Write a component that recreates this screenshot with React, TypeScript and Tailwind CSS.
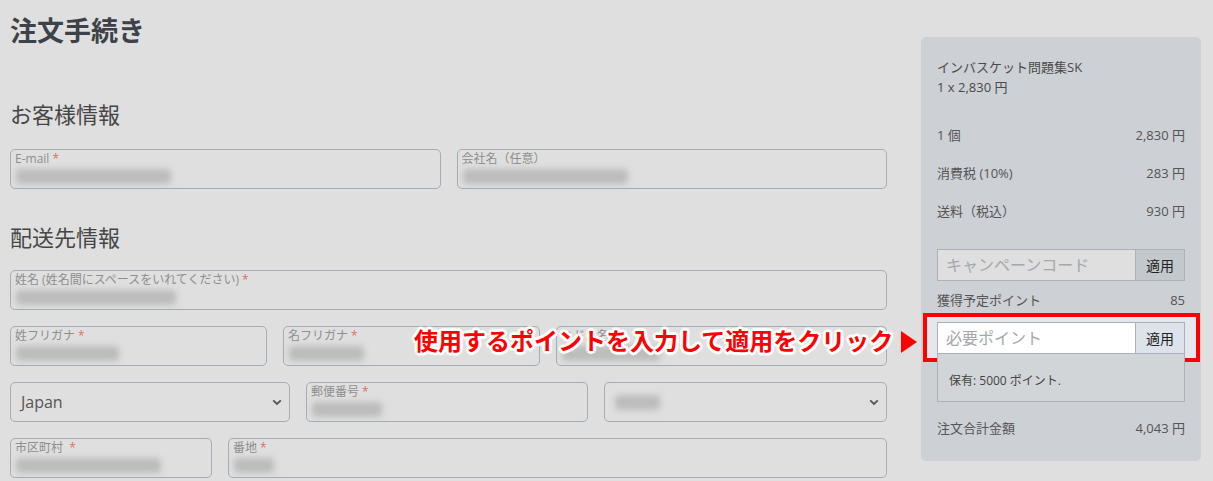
import React from "react";

const FONT = "font-['Open_Sans','Noto_Sans_CJK_JP',sans-serif]";

function Blur({ w, className = "" }: { w: number; className?: string }) {
  return (
    <div
      className={`h-[15px] bg-[#bcbcbc] blur-[3px] rounded-sm ${className}`}
      style={{ width: w }}
    />
  );
}

function Field({
  label,
  req = true,
  blurW,
  className = "",
}: {
  label: string;
  req?: boolean;
  blurW: number;
  className?: string;
}) {
  return (
    <div
      className={`h-[40px] border border-[#a3adb8] rounded-[5px] px-[4px] flex flex-col ${className}`}
    >
      <div className="text-[12px] leading-[14px] pt-[2px] text-[#8e8e8e] whitespace-nowrap">
        {label}
        {req && <span className="text-[#e0705e] ml-[3px]">*</span>}
      </div>
      <div className="mt-[3px] ml-[1px]">
        <Blur w={blurW} />
      </div>
    </div>
  );
}

function Chevron() {
  return (
    <svg width="10" height="7" viewBox="0 0 10 7" className="shrink-0">
      <path d="M1.2 1.3 L5 5 L8.8 1.3" fill="none" stroke="#555" strokeWidth="1.8" />
    </svg>
  );
}

function SelectBox({
  children,
  className = "",
}: {
  children: React.ReactNode;
  className?: string;
}) {
  return (
    <div
      className={`h-[40px] border border-[#a3adb8] rounded-[5px] pl-[8px] pr-[7px] flex items-center justify-between ${className}`}
    >
      {children}
      <Chevron />
    </div>
  );
}

function Row({ l, r }: { l: string; r: string }) {
  return (
    <div className="flex justify-between text-[13px] leading-[20px] text-[#555]">
      <span>{l}</span>
      <span>{r}</span>
    </div>
  );
}

export default function App() {
  const outline =
    "[text-shadow:2px_0_0_#fff,-2px_0_0_#fff,0_2px_0_#fff,0_-2px_0_#fff,2px_2px_0_#fff,-2px_-2px_0_#fff,2px_-2px_0_#fff,-2px_2px_0_#fff,3px_0_1px_#fff,-3px_0_1px_#fff,0_3px_1px_#fff,0_-3px_1px_#fff]";
  return (
    <div className={`${FONT} relative w-[1213px] h-[481px] overflow-hidden bg-[#dfdfdf]`}>
      <div className="flex pl-[10px] pr-[12px]">
        {/* main column */}
        <div className="w-[877px] shrink-0">
          <h1 className="pt-[13px] text-[27px] leading-[36px] font-bold text-[#3c4248]">
            注文手続き
          </h1>
          <h2 className="mt-[50px] text-[22px] leading-[30px] text-[#464646]">お客様情報</h2>
          <div className="mt-[20px] flex gap-[16px]">
            <Field label="E-mail" blurW={155} className="flex-1" />
            <Field label="会社名（任意）" req={false} blurW={165} className="flex-1" />
          </div>
          <h2 className="mt-[33px] text-[22px] leading-[30px] text-[#464646]">配送先情報</h2>
          <div className="mt-[18px]">
            <Field
              label="姓名 (姓名間にスペースをいれてください)"
              blurW={160}
              className="w-full"
            />
          </div>
          <div className="mt-[16px] flex gap-[16px]">
            <Field label="姓フリガナ" blurW={103} className="w-[257px]" />
            <Field label="名フリガナ" blurW={75} className="w-[257px]" />
            <Field label="ミドル名" req={false} blurW={98} className="flex-1" />
          </div>
          <div className="mt-[16px] flex gap-[16px]">
            <SelectBox className="w-[280px]">
              <span className="text-[16px] text-[#555] pl-[2px]">Japan</span>
            </SelectBox>
            <Field label="郵便番号" blurW={70} className="w-[282px]" />
            <SelectBox className="flex-1">
              <Blur w={45} className="ml-[2px]" />
            </SelectBox>
          </div>
          <div className="mt-[16px] flex gap-[16px]">
            <Field label="市区町村 " blurW={145} className="w-[202px]" />
            <Field label="番地" blurW={40} className="flex-1" />
          </div>
        </div>

        {/* right panel */}
        <div className="ml-[34px] mt-[37px] w-[280px] h-[424px] shrink-0 bg-[#cdd0d4] rounded-[5px] px-[16px] pt-[20px]">
          <div className="text-[13px] leading-[20px] text-[#4a4a4a]">インバスケット問題集SK</div>
          <div className="text-[13px] leading-[20px] text-[#4a4a4a]">1 x 2,830 円</div>
          <div className="mt-[28px] flex flex-col gap-[18px]">
            <Row l="1 個" r="2,830 円" />
            <Row l="消費税 (10%)" r="283 円" />
            <Row l="送料（税込）" r="930 円" />
          </div>
          <div className="mt-[28px] flex h-[32px] border border-[#a9b1ba]">
            <div className="flex-1 bg-[#dfdfdf] px-[8px] flex items-center text-[16px] text-[#a3a8ad]">
              キャンペーンコード
            </div>
            <div className="w-[49px] bg-[#c3c8cc] border-l border-[#a9b1ba] flex items-center justify-center text-[14px] text-[#222]">
              適用
            </div>
          </div>
          <div className="mt-[9px]">
            <Row l="獲得予定ポイント" r="85" />
          </div>
          <div className="relative mt-[12px]">
            <div className="absolute -left-[14px] -right-[15px] -top-[9px] -bottom-[8px] border-[4px] border-[#ff0000] bg-[#e4e8ec]" />
            <div className="relative flex h-[32px] border border-[#a9b1ba]">
              <div className="flex-1 bg-white px-[8px] flex items-center text-[16px] text-[#a3a8ad]">
                必要ポイント
              </div>
              <div className="w-[49px] bg-[#dde3ea] border-l border-[#a9b1ba] flex items-center justify-center text-[14px] text-[#222]">
                適用
              </div>
            </div>
          </div>
          <div className="relative h-[48px] border border-t-0 border-[#a9b1ba] bg-[#d2d5d8] flex items-center px-[11px] text-[12px] text-[#444]">
            <span className="mt-[6px]">保有: 5000 ポイント.</span>
          </div>
          <div className="mt-[16px]">
            <Row l="注文合計金額" r="4,043 円" />
          </div>
        </div>
      </div>

      {/* annotation */}
      <div
        className={`absolute left-[414px] top-[326px] text-[24px] leading-[30px] font-bold text-[#ff0000] whitespace-nowrap ${outline}`}
      >
        使用するポイントを入力して適用をクリック
      </div>
      <svg className="absolute left-[900px] top-[330px]" width="18" height="24" viewBox="0 0 18 24">
        <path d="M1 1 L17 12 L1 23 Z" fill="#ff0000" />
      </svg>
    </div>
  );
}
